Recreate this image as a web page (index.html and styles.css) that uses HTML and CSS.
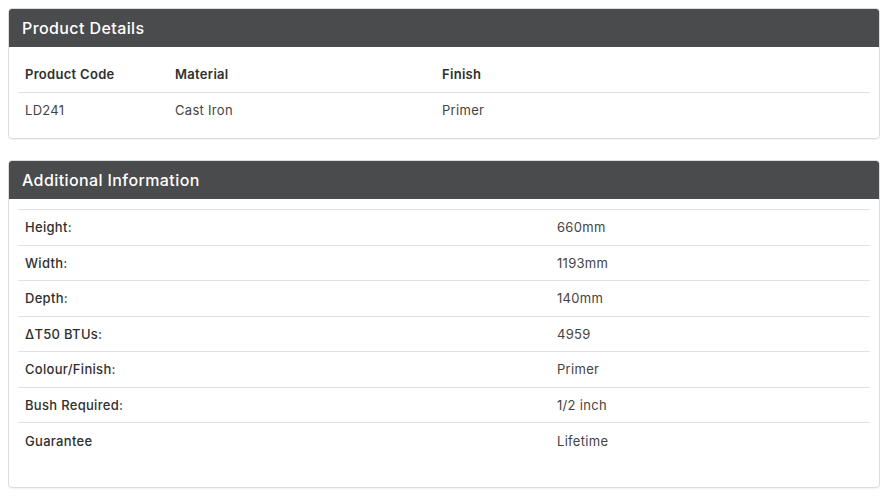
FILE: index.html
```html
<!DOCTYPE html>
<html lang="en">
<head>
<meta charset="utf-8">
<title>Product Details</title>
<link rel="stylesheet" href="styles.css">
</head>
<body>
<section class="card">
  <h2 class="card-header">Product Details</h2>
  <div class="card-body">
    <table class="spec spec-cols">
      <thead>
        <tr><th class="c1">Product Code</th><th class="c2">Material</th><th>Finish</th></tr>
      </thead>
      <tbody>
        <tr><td>LD241</td><td>Cast Iron</td><td>Primer</td></tr>
      </tbody>
    </table>
  </div>
</section>
<section class="card">
  <h2 class="card-header">Additional Information</h2>
  <div class="card-body body-tall">
    <table class="spec spec-rows">
      <tbody>
        <tr><th>Height:</th><td>660mm</td></tr>
        <tr><th>Width:</th><td>1193mm</td></tr>
        <tr><th>Depth:</th><td>140mm</td></tr>
        <tr><th>&Delta;T50 BTUs:</th><td>4959</td></tr>
        <tr><th>Colour/Finish:</th><td>Primer</td></tr>
        <tr><th>Bush Required:</th><td>1/2 inch</td></tr>
        <tr><th>Guarantee</th><td>Lifetime</td></tr>
      </tbody>
    </table>
  </div>
</section>
</body>
</html>
```
FILE: styles.css
```css
* { box-sizing: border-box; }
body {
  margin: 8px 6px 8px 8px;
  font-family: "Inter", "Open Sans", sans-serif;
  color: #333;
  background: #fff;
}
.card {
  border: 1px solid #dcdcdc;
  border-radius: 4px;
  overflow: hidden;
  margin-bottom: 21px;
  box-shadow: 0 1px 2px rgba(0,0,0,0.06);
}
.card-header {
  margin: 0;
  background: #4a4b4d;
  color: #fff;
  font-size: 16px;
  font-weight: 500;
  letter-spacing: 0.4px;
  height: 38px;
  line-height: 38px;
  padding: 0 13px;
}
.card-body {
  padding: 9px 9px 10px;
}
.body-tall { padding-top: 10px; padding-bottom: 29px; }
.spec {
  width: 100%;
  border-collapse: collapse;
  font-size: 13px;
  letter-spacing: 0.3px;
}
.spec th, .spec td {
  text-align: left;
  padding: 0 7px;
  height: 36px;
  vertical-align: middle;
}
.spec th { font-weight: 600; color: #2f2f2f; }
.spec td { font-weight: 400; color: #444; }
.spec-cols thead th { border-bottom: 1px solid #dee2e6; }
.spec-cols .c1 { width: 150px; }
.spec-cols .c2 { width: 267px; }
.spec-rows tr { border-top: 1px solid #dee2e6; }
.spec-rows th, .spec-rows td { height: 35.5px; }
.spec-rows th { width: 532px; font-weight: 500; }
```
